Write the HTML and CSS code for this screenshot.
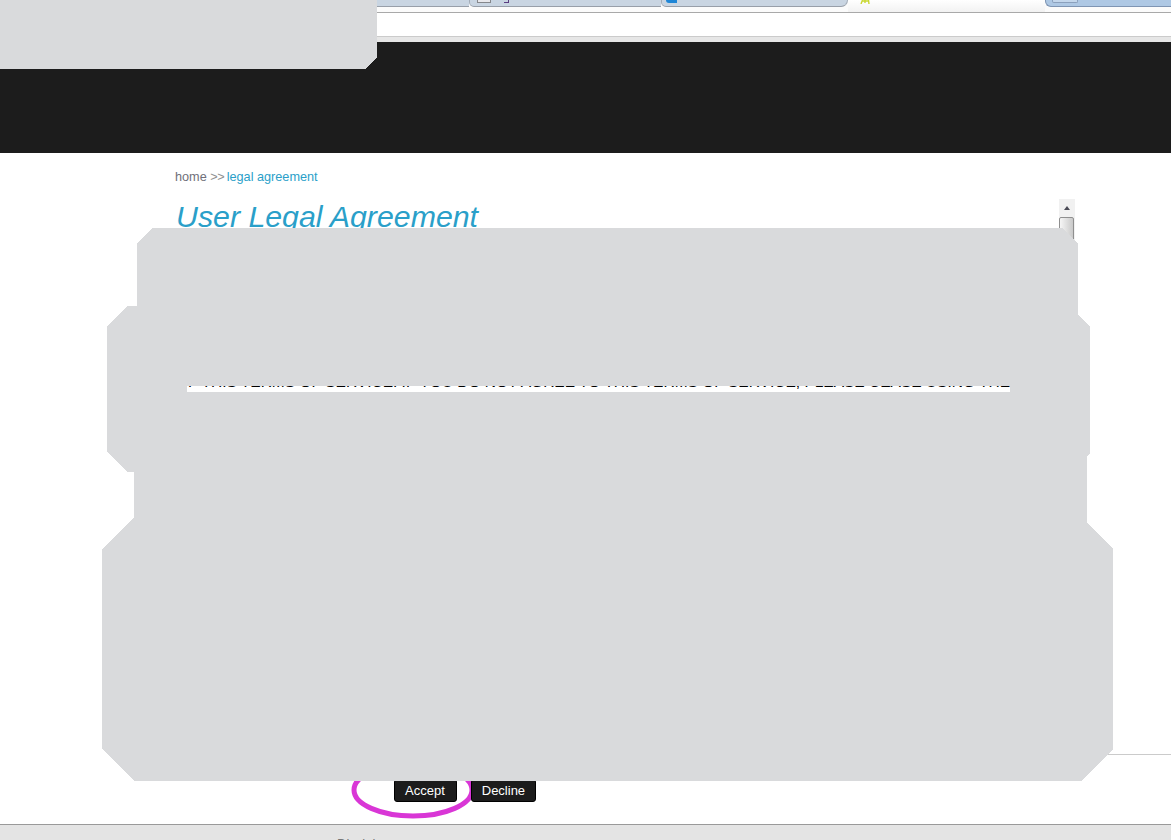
FILE: index.html
```html
<!DOCTYPE html>
<html lang="en">
<head>
<meta charset="utf-8">
<title>User Legal Agreement</title>
<link rel="stylesheet" href="styles.css">
</head>
<body>
<div class="page">
  <header class="chrome">
    <div class="tabs">
      <div class="tab tab-first"></div>
      <div class="tab tab-second">
        <span class="tab-icon-page"></span>
        <span class="tab-label-tail"></span>
      </div>
      <div class="tab tab-third"><span class="tab-icon-blue"></span></div>
      <div class="tab-active">
        <svg class="tab-icon-star" width="10" height="4" viewBox="0 0 10 4"><path d="M1 4 L2.5 0 M5 0 V3 M8.5 0 L9 4 M2.5 1 H8" stroke="#c9d832" stroke-width="1.4" fill="none"/></svg>
      </div>
      <div class="tab-blue"><span class="tab-blue-button"></span></div>
    </div>
    <div class="address"></div>
    <div class="toolbar-strip"></div>
  </header>
  <div class="banner"></div>
  <main class="content">
    <nav class="crumbs"><span class="crumb-home">home</span> <span class="crumb-sep">&gt;&gt;</span> <span class="crumb-here">legal agreement</span></nav>
    <section class="pane">
      <div class="pane-body">
        <h1 class="title">User Legal Agreement</h1>
        <p class="terms">F THIS TERMS OF SERVICE. IF YOU DO NOT AGREE TO THIS TERMS OF SERVICE, PLEASE CEASE USING THE SITE</p>
      </div>
      <div class="scrollbar">
        <div class="scroll-up"><span class="scroll-arrow"></span></div>
        <div class="scroll-thumb"></div>
      </div>
    </section>
    <hr class="rule">
    <div class="actions">
      <svg class="mark" width="130" height="60" viewBox="0 0 130 60"><ellipse cx="62" cy="30" rx="59" ry="26" fill="none" stroke="#d936d6" stroke-width="5"/></svg>
      <button class="btn btn-accept" type="button">Accept</button>
      <button class="btn" type="button">Decline</button>
    </div>
  </main>
  <footer class="footer"><span class="footer-link">Disclaimer</span></footer>
  <svg class="redactions" width="1171" height="840" viewBox="0 0 1171 840">
    <path class="redact" d="M0 0 H377 V57 L365 69 H0 Z"/>
    <path class="redact" fill-rule="evenodd" d="M152 228 H1062 L1078 243 V315 L1090 326 V453 L1087 456 V523 L1113 549 V749 L1081 781 H134 L102 749 V549 L134 518 V472 H127 L107 452 V326 L127 306 H137 V243 Z M187 386 V392 H1010 V386 Z"/>
  </svg>
</div>
</body>
</html>
```

FILE: styles.css
```css
html, body {
  margin: 0;
  padding: 0;
  height: 100%;
  overflow: hidden;
  background: #fff;
}

.page {
  position: relative;
  display: flex;
  flex-direction: column;
  width: 1171px;
  height: 840px;
  overflow: hidden;
  font-family: "Liberation Sans", Arial, sans-serif;
}

/* browser chrome */
.chrome {
  display: flex;
  flex-direction: column;
  flex: none;
}

.tabs {
  display: flex;
  height: 12px;
  background: #fbfbfb;
  border-bottom: 1px solid #a9a9a9;
}

.tab {
  box-sizing: border-box;
  display: flex;
  align-items: flex-start;
  height: 7px;
  background: #c9d5e2;
  border-bottom: 1px solid #989fa9;
  border-left: 1px solid #a3acb8;
  border-bottom-left-radius: 5px;
}

.tab-first { width: 469px; }
.tab-second { width: 192px; padding-left: 7px; }
.tab-third { width: 187px; padding-left: 4px; border-bottom-right-radius: 7px; border-right: 1px solid #a3acb8; }

.tab-icon-page {
  box-sizing: border-box;
  width: 14px;
  height: 3px;
  border: 1px solid #85878b;
  border-top: 0;
  background: #e8e8ec;
}

.tab-label-tail {
  width: 4px;
  height: 2px;
  margin-left: 13px;
  border-bottom: 1px solid #5a3c80;
  border-right: 1px solid #5a3c80;
}

.tab-icon-blue {
  width: 11px;
  height: 3px;
  background: #1f86d6;
  border-bottom-left-radius: 4px;
}

.tab-active {
  width: 197px;
  padding-left: 12px;
  box-sizing: border-box;
  background: linear-gradient(#fff, #f2f2f2);
}

.tab-icon-star {
  display: block;
}

.tab-blue {
  box-sizing: border-box;
  width: 126px;
  height: 7px;
  padding-left: 6px;
  background: #aec8e4;
  border-left: 1px solid #7f95b3;
  border-bottom: 1px solid #7f95b3;
  border-bottom-left-radius: 6px;
}

.tab-blue-button {
  display: block;
  box-sizing: border-box;
  width: 26px;
  height: 3px;
  background: #c4d7ec;
  border: 1px solid #8ba0bc;
  border-top: 0;
  border-radius: 0 0 2px 2px;
}

.address {
  height: 23px;
  background: #fff;
  border-bottom: 1px solid #cbcbcb;
}

.toolbar-strip {
  height: 5px;
  background: #e6e6e6;
}

.banner {
  flex: none;
  height: 111px;
  background: #1c1c1c;
}

/* main */
.content {
  display: flex;
  flex-direction: column;
  flex: none;
  height: 671px;
}

.crumbs {
  height: 14px;
  margin: 17px 0 15px 175px;
  font-size: 12.7px;
  line-height: 14px;
  color: #8a8a8a;
}

.crumb-home { color: #6f6f7a; }
.crumb-sep { color: #8f8f8f; letter-spacing: -0.5px; margin-right: -1px; }
.crumb-here { color: #2a9fc9; }

.pane {
  display: flex;
  width: 900px;
  height: 555px;
  margin-left: 175px;
}

.pane-body {
  flex: 1;
  min-width: 0;
  overflow: hidden;
}

.title {
  margin: 0 0 0 1px;
  font-size: 30.3px;
  line-height: 36px;
  font-weight: normal;
  font-style: italic;
  color: #2a9fc9;
}

.terms {
  margin: 139px 0 0 13px;
  font-size: 15.5px;
  line-height: 16px;
  color: #000;
  white-space: nowrap;
}

.scrollbar {
  flex: none;
  width: 16px;
  background: #f1f1f1;
}

.scroll-up {
  display: flex;
  justify-content: center;
  padding-top: 7px;
  height: 11px;
}

.scroll-arrow {
  width: 0;
  height: 0;
  border: 3.5px solid transparent;
  border-top: 0;
  border-bottom: 4px solid #4a4a55;
}

.scroll-thumb {
  box-sizing: border-box;
  width: 15px;
  height: 300px;
  border: 1px solid #8f8f8f;
  border-radius: 2px;
  background: linear-gradient(90deg, #f6f6f6, #c9c9c9);
}

.rule {
  height: 1px;
  margin: 0 0 0 175px;
  border: 0;
  background: #cbcbcb;
}

.actions {
  position: relative;
  display: flex;
  gap: 14px;
  padding: 24px 0 0 394px;
}

.mark {
  position: absolute;
  left: 351px;
  top: 5px;
}

.btn {
  position: relative;
  box-sizing: border-box;
  height: 23px;
  padding: 0 10px;
  border: 1px solid #000;
  border-radius: 3px;
  background: #1c1c1c;
  color: #fff;
  font-family: "Liberation Sans", Arial, sans-serif;
  font-size: 13px;
}

.btn-accept {
  padding-right: 11px;
}

.footer {
  flex: 1;
  padding: 11px 0 0 337px;
  background: #e4e4e4;
  border-top: 1px solid #9a9a9a;
  font-size: 13px;
  line-height: 15px;
  color: #777;
}

/* redaction patches over the page */
.redactions {
  position: absolute;
  left: 0;
  top: 0;
}

.redact {
  fill: #d9dadc;
  shape-rendering: crispEdges;
}
```
